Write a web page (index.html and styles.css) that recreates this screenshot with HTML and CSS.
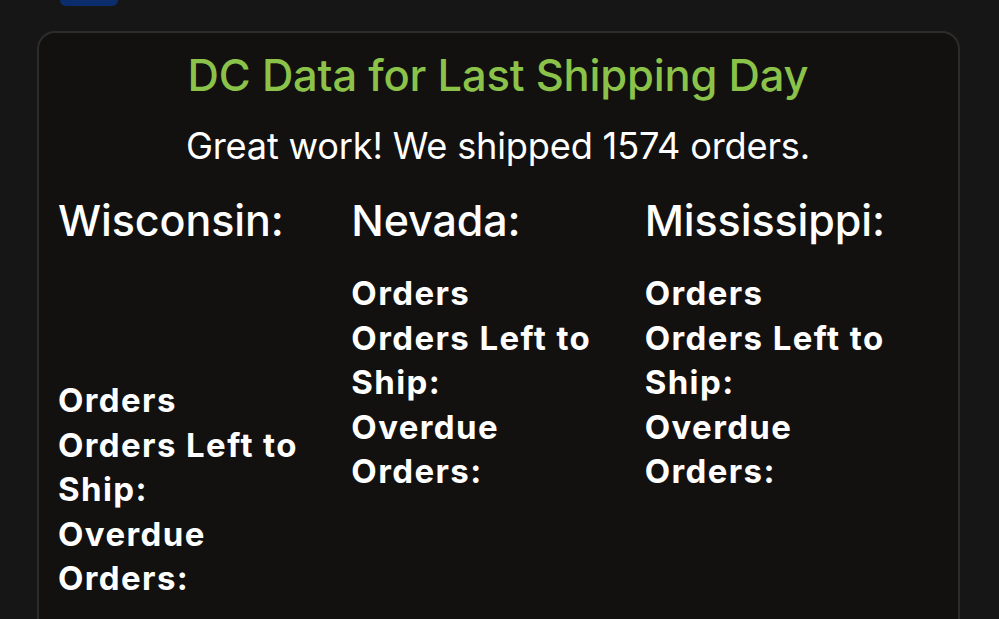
FILE: index.html
```html
<!DOCTYPE html>
<html lang="en">
<head>
<meta charset="utf-8">
<title>DC Data</title>
<link rel="stylesheet" href="styles.css">
</head>
<body>
<div class="topbtn"></div>
<section class="card">
  <h1 class="title">DC Data for Last Shipping Day</h1>
  <p class="subtitle">Great work! We shipped 1574 orders.</p>
  <div class="cols">
    <div class="col">
      <h2 class="state">Wisconsin:</h2>
      <div class="spacer"></div>
      <div class="stats">
        <div>Orders</div>
        <div>Orders Left to Ship:</div>
        <div>Overdue Orders:</div>
      </div>
    </div>
    <div class="col">
      <h2 class="state">Nevada:</h2>
      <div class="stats">
        <div>Orders</div>
        <div>Orders Left to Ship:</div>
        <div>Overdue Orders:</div>
      </div>
    </div>
    <div class="col">
      <h2 class="state">Mississippi:</h2>
      <div class="stats">
        <div>Orders</div>
        <div>Orders Left to Ship:</div>
        <div>Overdue Orders:</div>
      </div>
    </div>
  </div>
</section>
</body>
</html>
```

FILE: styles.css
```css
html, body {
  margin: 0;
  padding: 0;
  background: #161616;
  font-family: Inter, "Noto Sans", sans-serif;
  color: #ffffff;
  overflow: hidden;
}
.topbtn {
  margin-left: 60px;
  width: 58px;
  height: 6px;
  background: #0b2d6b;
  border-radius: 0 0 8px 8px;
}
.card {
  margin: 25px 39px 0 37px;
  background: #121110;
  border: 2px solid #2c2c2c;
  border-radius: 18px;
  padding: 0 20px 40px 19px;
  height: 700px;
}
.title {
  margin: 0;
  padding-top: 14px;
  text-align: center;
  color: #8bc34a;
  font-size: 43.5px;
  font-weight: 500;
  line-height: 56px;
  letter-spacing: -0.2px;
}
.subtitle {
  margin: 20px 0 0;
  text-align: center;
  font-size: 36.2px;
  font-weight: 400;
  line-height: 46px;
  letter-spacing: -0.2px;
}
.cols {
  display: grid;
  grid-template-columns: repeat(3, 1fr);
  margin-top: 25px;
}
.col {
  padding-right: 10px;
}
.state {
  margin: 0;
  font-size: 43px;
  font-weight: 500;
  line-height: 52px;
  letter-spacing: -0.1px;
}
.spacer {
  height: 107px;
}
.stats {
  margin-top: 25px;
  font-size: 33px;
  font-weight: 700;
  line-height: 44.5px;
  letter-spacing: 1.4px;
  width: 270px;
}
```
